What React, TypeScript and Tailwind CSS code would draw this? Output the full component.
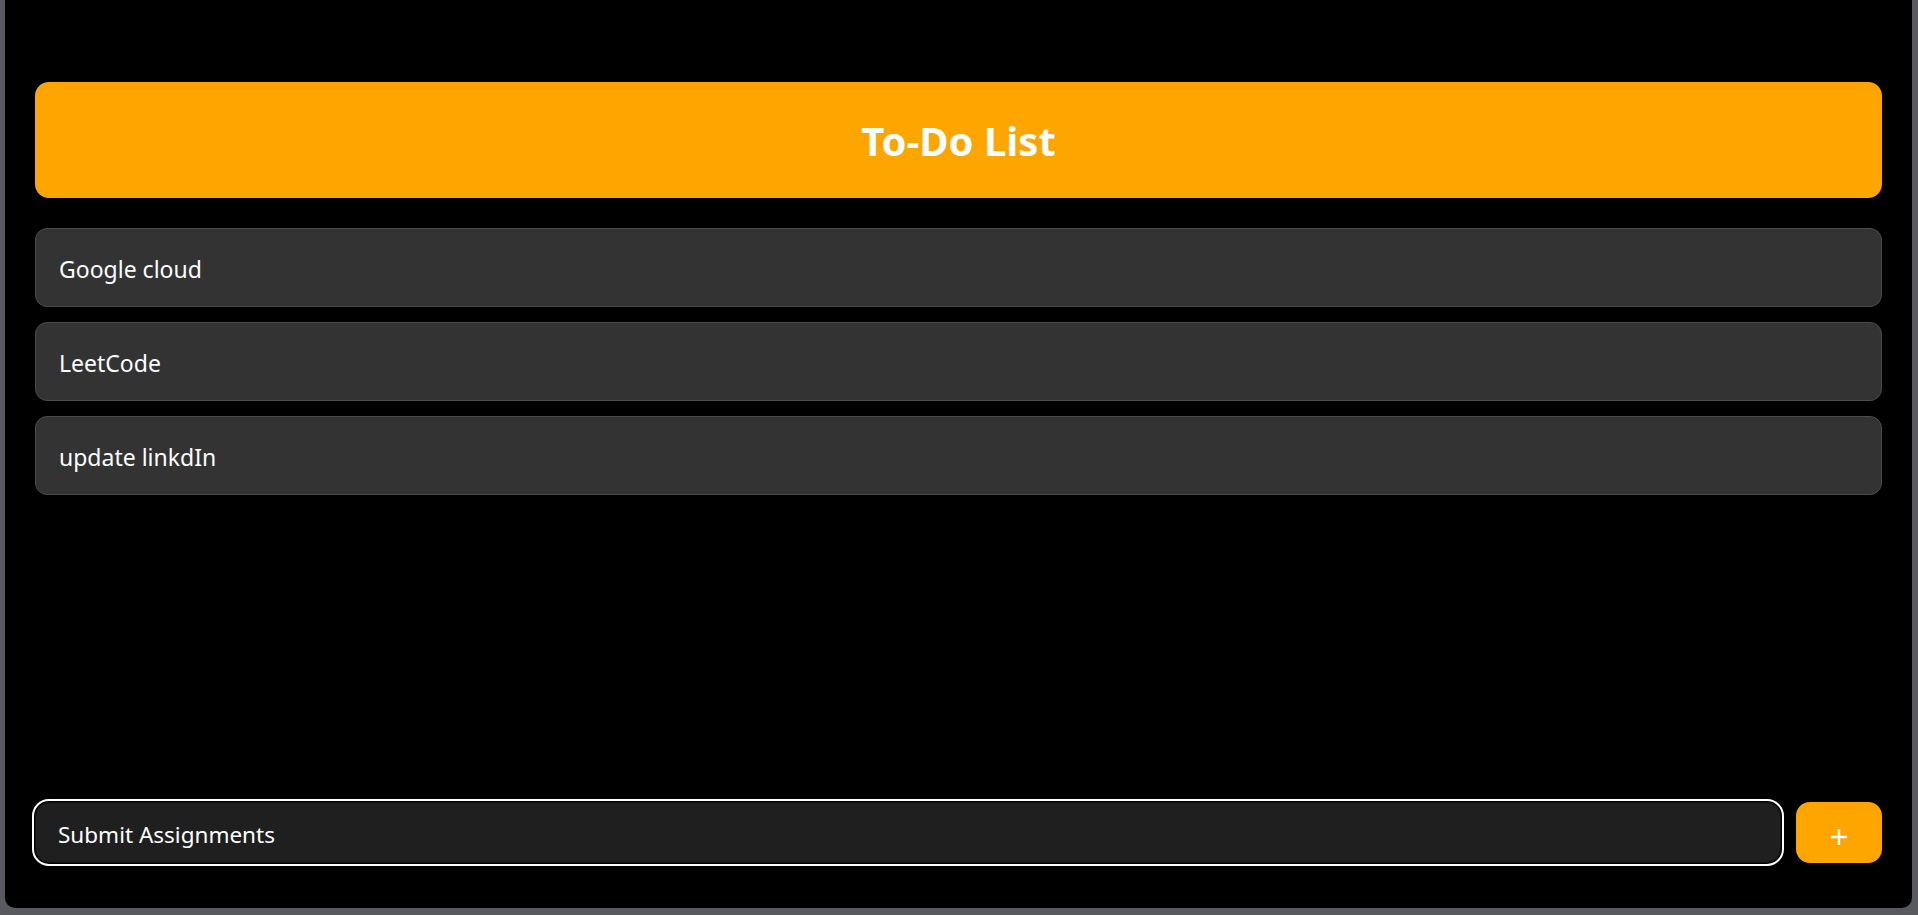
import { useState } from "react";

const todos = ["Google cloud", "LeetCode", "update linkdIn"];

export default function App() {
  const [text, setText] = useState("Submit Assignments");

  return (
    <div className="h-[915px] w-full bg-[#585a60] pl-[5px] pr-[6px] pb-[7px]" style={{ fontFamily: '"Noto Sans", "Open Sans", sans-serif' }}>
      <div className="flex h-full flex-col rounded-b-[10px] bg-black px-[30px] pt-[82px] pb-[45px]">
        <div className="flex h-[116px] items-center justify-center rounded-[14px] bg-[#ffa500] pt-[2px]">
          <h1 className="text-[40px] font-bold text-white">To-Do List</h1>
        </div>

        <ul className="mt-[30px] flex flex-col gap-[15px]">
          {todos.map((t) => (
            <li
              key={t}
              className="flex h-[79px] items-center rounded-[12px] border border-[#4a4a4a] bg-[#333333] px-[23px] pt-[4px] text-[23px] text-white"
            >
              {t}
            </li>
          ))}
        </ul>

        <div className="mt-auto flex items-center gap-[15px]">
          <input
            value={text}
            onChange={(e) => setText(e.target.value)}
            className="h-[61px] flex-1 rounded-[14px] border border-[#111] bg-[#1f1f1f] px-[22px] pt-[3px] text-[22.5px] text-white outline-2 outline-offset-1 outline-white"
          />
          <button className="flex h-[61px] w-[86px] items-center justify-center rounded-[14px] bg-[#ffa500] text-white">
            <svg width="18" height="18" viewBox="0 0 18 18" className="mt-[9px]">
              <path d="M9 1v16M1 9h16" stroke="white" strokeWidth="2.4" />
            </svg>
          </button>
        </div>
      </div>
    </div>
  );
}
